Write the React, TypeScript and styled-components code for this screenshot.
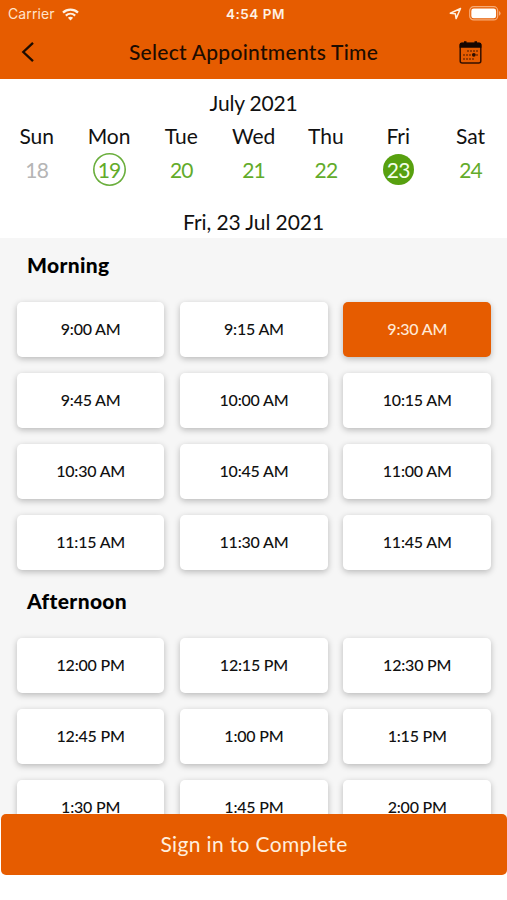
import React from "react";
import styled, { createGlobalStyle, css } from "styled-components";

const ORANGE = "#e65c00";

const GlobalStyle = createGlobalStyle`
  * { box-sizing: border-box; }
  body { margin: 0; background: #fff; }
  button { font: inherit; border: 0; padding: 0; background: none; cursor: pointer; }
`;

const Screen = styled.div`
  width: 507px;
  height: 900px;
  display: flex;
  flex-direction: column;
  overflow: hidden;
  background: #fff;
  color: #111;
  font-family: Lato, "Open Sans", sans-serif;
`;

const Header = styled.header`
  flex: none;
  height: 79px;
  background: ${ORANGE};
`;

const StatusBar = styled.div`
  height: 27px;
  display: grid;
  grid-template-columns: 1fr auto 1fr;
  align-items: center;
  padding: 1px 6px 0 8px;
  color: #fff2e4;
  font: 14px/26px Inter, sans-serif;
`;

const Carrier = styled.div`
  display: flex;
  align-items: center;
  gap: 7px;
  letter-spacing: 0.1px;
  color: #ffe3cb;
`;

const Clock = styled.div`
  font-weight: 600;
  font-size: 13.5px;
  letter-spacing: 0.5px;
  padding-left: 2px;
`;

const Indicators = styled.div`
  display: flex;
  align-items: center;
  justify-content: flex-end;
  gap: 7px;
  margin-top: -2px;
`;

const NavBar = styled.div`
  height: 50px;
  display: grid;
  grid-template-columns: 56px 1fr 56px;
  align-items: center;
  color: #1d0c00;
`;

const IconButton = styled.button`
  height: 40px;
  display: flex;
  align-items: center;
  justify-content: center;
  color: inherit;
`;

const CalendarButton = styled(IconButton)`
  padding-right: 18px;
`;

const Title = styled.h1`
  margin: 0;
  text-align: center;
  font-size: 21px;
  font-weight: 500;
  line-height: 50px;
  letter-spacing: 0.28px;
`;

const Calendar = styled.section`
  flex: none;
  height: 159px;
  display: flex;
  flex-direction: column;
  padding-top: 9px;
  font-size: 21px;
  text-align: center;
`;

const Month = styled.div`
  line-height: 30px;
  letter-spacing: -0.2px;
`;

const Week = styled.div`
  display: grid;
  grid-template-columns: repeat(7, 72.3px);
  padding: 2px 0 0 0.6px;
`;

const Day = styled.div`
  display: flex;
  flex-direction: column;
  align-items: center;
`;

const DayName = styled.div`
  line-height: 32px;
`;

const DayNumber = styled.button<{ $kind?: "past" | "today" | "selected" }>`
  width: 33px;
  height: 33px;
  margin-top: 1px;
  border-radius: 50%;
  line-height: 33px;
  letter-spacing: -0.8px;
  color: #62ab2a;
  ${(p) => p.$kind === "past" && css`color: #b5b5b5;`}
  ${(p) => p.$kind === "today" && css`box-shadow: inset 0 0 0 1.6px #6aae3c;`}
  ${(p) =>
    p.$kind === "selected" &&
    css`
      width: 31px;
      height: 31px;
      margin-top: 2px;
      line-height: 31px;
      background: #57a00f;
      color: #f4ffe9;
    `}
`;

const SelectedDate = styled.div`
  margin-top: 20px;
  line-height: 32px;
  letter-spacing: -0.08px;
`;

const Slots = styled.main`
  flex: none;
  height: 582px;
  margin-bottom: -6.5px;
  overflow: hidden;
  background: #f6f6f6;
`;

const GroupTitle = styled.h2`
  margin: 0;
  height: 64px;
  padding: 11px 27px 0;
  font-size: 21px;
  font-weight: 900;
  line-height: 31px;
  letter-spacing: 0.35px;
  color: #000;
`;

const SlotGrid = styled.div`
  display: grid;
  grid-template-columns: repeat(3, 147.7px);
  grid-auto-rows: 55px;
  gap: 16px 15.6px;
  padding: 0 16.8px;
  margin-bottom: 4px;
`;

const Slot = styled.button<{ $selected?: boolean }>`
  border-radius: 5px;
  background: ${(p) => (p.$selected ? ORANGE : "#fff")};
  color: ${(p) => (p.$selected ? "#ffe9d6" : "#111")};
  box-shadow: 0 2px 6px rgba(0, 0, 0, 0.25);
  font-size: 16px;
  font-weight: 500;
  line-height: 53px;
  padding-bottom: 2px;
  letter-spacing: -0.2px;
  text-align: center;
`;

const SignIn = styled.button`
  flex: none;
  position: relative;
  height: 61px;
  margin-left: 1px;
  border-radius: 5px;
  background: ${ORANGE};
  color: #ffeedd;
  font-size: 21px;
  line-height: 59px;
  padding-bottom: 2px;
  letter-spacing: 0.35px;
`;

const WifiIcon = () => (
  <svg width="17" height="13" viewBox="0 0 17 13" fill="none" stroke="#fff2e4">
    <path d="M1 4.6C5.2.7 11.8.7 16 4.6" strokeWidth="2.3" />
    <path d="M3.8 7.6C6.5 5.2 10.5 5.2 13.2 7.6" strokeWidth="2.1" />
    <path d="M5.9 9.8C7.4 8.5 9.6 8.5 11.1 9.8L8.5 12.5Z" fill="#fff2e4" stroke="none" />
  </svg>
);

const LocationIcon = () => (
  <svg width="13" height="13" viewBox="0 0 13 13" fill="none" stroke="#fff0df" strokeWidth="1.5" strokeLinejoin="round">
    <path d="M11.5 1.5L1.3 6.2L6.3 6.7L7.1 11.6Z" />
  </svg>
);

const BatteryIcon = () => (
  <svg width="32" height="15" viewBox="0 0 32 15">
    <rect x="0.7" y="0.7" width="28" height="13.2" rx="4" fill="none" stroke="#f7ab77" strokeWidth="1.2" />
    <rect x="2.3" y="2.5" width="24.8" height="9.8" rx="2.4" fill="#fff" />
    <path d="M30 5V9.8Q31.6 8.8 31.6 7.4T30 5Z" fill="#f7ab77" />
  </svg>
);

const BackIcon = () => (
  <svg width="14" height="22" viewBox="0 0 14 22" fill="none" stroke="currentColor" strokeWidth="2.3">
    <path d="M12 1.8L2.3 11L12 20.2" />
  </svg>
);

const dots = [
  [9, 10], [12, 10], [15, 10], [18, 10],
  [5, 14], [8, 14], [11, 14], [18, 14],
  [5, 18], [8, 18], [11, 18], [14, 18],
];

const CalendarIcon = () => (
  <svg width="23" height="23" viewBox="0 0 23 23">
    <rect x="1.2" y="2.4" width="20.6" height="19.6" rx="2" fill="none" stroke="#351100" strokeWidth="1.5" />
    <path d="M.6 6.7V3.6Q.6 1.6 2.6 1.6H5V.3H7.5V1.6H15.5V.3H18V1.6H20.4Q22.4 1.6 22.4 3.6V6.7Z" fill="#160600" />
    {dots.map(([x, y]) => (
      <rect key={`${x}-${y}`} x={x - 0.8} y={y - 0.8} width="1.6" height="1.6" fill="#6d2800" />
    ))}
    <circle cx="14.8" cy="13.8" r="1.9" fill="#2b0e00" />
  </svg>
);

const days = [
  { name: "Sun", date: 18, kind: "past" as const },
  { name: "Mon", date: 19, kind: "today" as const },
  { name: "Tue", date: 20 },
  { name: "Wed", date: 21 },
  { name: "Thu", date: 22 },
  { name: "Fri", date: 23, kind: "selected" as const },
  { name: "Sat", date: 24 },
];

const groups = [
  {
    title: "Morning",
    times: [
      "9:00 AM", "9:15 AM", "9:30 AM", "9:45 AM", "10:00 AM", "10:15 AM",
      "10:30 AM", "10:45 AM", "11:00 AM", "11:15 AM", "11:30 AM", "11:45 AM",
    ],
  },
  {
    title: "Afternoon",
    times: [
      "12:00 PM", "12:15 PM", "12:30 PM", "12:45 PM", "1:00 PM", "1:15 PM",
      "1:30 PM", "1:45 PM", "2:00 PM",
    ],
  },
];

export default function App() {
  return (
    <Screen>
      <GlobalStyle />
      <Header>
        <StatusBar>
          <Carrier>
            Carrier
            <WifiIcon />
          </Carrier>
          <Clock>4:54 PM</Clock>
          <Indicators>
            <LocationIcon />
            <BatteryIcon />
          </Indicators>
        </StatusBar>
        <NavBar>
          <IconButton aria-label="Back">
            <BackIcon />
          </IconButton>
          <Title>Select Appointments Time</Title>
          <CalendarButton aria-label="Calendar">
            <CalendarIcon />
          </CalendarButton>
        </NavBar>
      </Header>
      <Calendar>
        <Month>July 2021</Month>
        <Week>
          {days.map((d) => (
            <Day key={d.name}>
              <DayName>{d.name}</DayName>
              <DayNumber $kind={d.kind}>{d.date}</DayNumber>
            </Day>
          ))}
        </Week>
        <SelectedDate>Fri, 23 Jul 2021</SelectedDate>
      </Calendar>
      <Slots>
        {groups.map((g) => (
          <section key={g.title}>
            <GroupTitle>{g.title}</GroupTitle>
            <SlotGrid>
              {g.times.map((t) => (
                <Slot key={t} $selected={t === "9:30 AM"}>
                  {t}
                </Slot>
              ))}
            </SlotGrid>
          </section>
        ))}
      </Slots>
      <SignIn>Sign in to Complete</SignIn>
    </Screen>
  );
}
